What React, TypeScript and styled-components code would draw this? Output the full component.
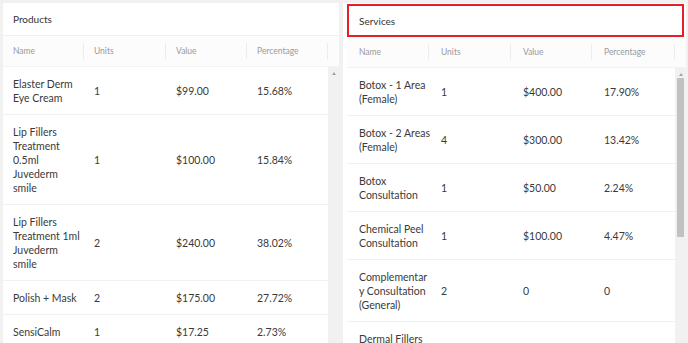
import styled, { createGlobalStyle } from "styled-components";

const GlobalStyle = createGlobalStyle`
    html, body {
        margin: 0;
        padding: 0;
        height: 343px;
        overflow: hidden;
        background: #f1f1f2;
    }
    body {
        font-family: Lato, "Open Sans", "Liberation Sans", sans-serif;
        color: #3b3b3b;
    }
`;

type Row = { name: string[]; units: string; value: string; pct: string };

const products: Row[] = [
    { name: ["Elaster Derm", "Eye Cream"], units: "1", value: "$99.00", pct: "15.68%" },
    { name: ["Lip Fillers", "Treatment", "0.5ml", "Juvederm", "smile"], units: "1", value: "$100.00", pct: "15.84%" },
    { name: ["Lip Fillers", "Treatment 1ml", "Juvederm", "smile"], units: "2", value: "$240.00", pct: "38.02%" },
    { name: ["Polish + Mask"], units: "2", value: "$175.00", pct: "27.72%" },
    { name: ["SensiCalm"], units: "1", value: "$17.25", pct: "2.73%" },
];

const services: Row[] = [
    { name: ["Botox - 1 Area", "(Female)"], units: "1", value: "$400.00", pct: "17.90%" },
    { name: ["Botox - 2 Areas", "(Female)"], units: "4", value: "$300.00", pct: "13.42%" },
    { name: ["Botox", "Consultation"], units: "1", value: "$50.00", pct: "2.24%" },
    { name: ["Chemical Peel", "Consultation"], units: "1", value: "$100.00", pct: "4.47%" },
    { name: ["Complementar", "y Consultation", "(General)"], units: "2", value: "0", pct: "0" },
    { name: ["Dermal Fillers", "Consultation", "(Lips)"], units: "1", value: "$0.00", pct: "0.00%" },
];

const Page = styled.div`
    display: grid;
    grid-template-columns: 336px 343px;
    column-gap: 4px;
    padding: 3px 2px 0 3px;
    height: 340px;
`;

const Panel = styled.section<{ $pad: number; $cols: string }>`
    --cell-pad: ${(p) => p.$pad}px;
    --cols: ${(p) => p.$cols};
    background: #ffffff;
    display: flex;
    flex-direction: column;
    overflow: hidden;
    min-height: 0;
`;

const Title = styled.div<{ $focused?: boolean }>`
    height: 33px;
    box-sizing: border-box;
    display: flex;
    align-items: center;
    padding-left: ${(p) => (p.$focused ? "10px" : "var(--cell-pad)")};
    font-size: 10px;
    color: #333;
    border: ${(p) => (p.$focused ? "2px solid #e3202a" : "none")};
    border-bottom: ${(p) => (p.$focused ? "2px solid #e3202a" : "1px solid #efefef")};
    margin: ${(p) => (p.$focused ? "1px 2px 0 4px" : "0")};
`;

const Body = styled.div<{ $offset?: boolean }>`
    display: flex;
    flex-direction: column;
    flex: 1;
    min-height: 0;
    padding-left: ${(p) => (p.$offset ? "4px" : "0")};
`;

const HeadRow = styled.div`
    display: grid;
    grid-template-columns: var(--cols) 1fr;
    height: 30px;
    background: #fcfcfc;
    border-bottom: 1px solid #f3f3f3;
`;

const HeadCell = styled.div`
    position: relative;
    display: flex;
    align-items: center;
    padding-left: var(--cell-pad);
    font-size: 8.5px;
    color: #9a9a9a;

    &::after {
        content: "";
        position: absolute;
        right: 0;
        top: 7px;
        bottom: 7px;
        width: 1px;
        background: #ececec;
    }
`;

const Scroller = styled.div`
    display: flex;
    flex: 1;
    min-height: 0;
    overflow: hidden;
`;

const Rows = styled.div`
    flex: 1;
`;

const DataRow = styled.div`
    display: grid;
    grid-template-columns: var(--cols);
    align-items: center;
    padding: 10px 0 9px;
    border-bottom: 1px solid #f1f1f1;
`;

const Cell = styled.div`
    padding-left: var(--cell-pad);
    font-size: 10.5px;
    line-height: 14px;
    color: #3a3a3a;
`;

const Line = styled.span`
    display: block;
    white-space: nowrap;
`;

const Track = styled.div`
    width: 11px;
    flex: none;
    background: #f1f1f1;
    display: flex;
    flex-direction: column;
    align-items: center;
    padding-top: 5px;
    box-sizing: border-box;
`;

const Arrow = styled.div`
    width: 0;
    height: 0;
    border-left: 2.5px solid transparent;
    border-right: 2.5px solid transparent;
    border-bottom: 3px solid #a3a3a3;
`;

const Thumb = styled.div<{ $top: number; $size: number }>`
    width: 7px;
    margin-top: ${(p) => p.$top}px;
    height: ${(p) => p.$size}px;
    background: #c1c1c1;
`;

function Table({ rows, thumb }: { rows: Row[]; thumb?: { top: number; size: number } }) {
    return (
        <>
            <HeadRow>
                <HeadCell>Name</HeadCell>
                <HeadCell>Units</HeadCell>
                <HeadCell>Value</HeadCell>
                <HeadCell>Percentage</HeadCell>
            </HeadRow>
            <Scroller>
                <Rows>
                    {rows.map((r, i) => (
                        <DataRow key={i}>
                            <Cell>
                                {r.name.map((l, j) => (
                                    <Line key={j}>{l}</Line>
                                ))}
                            </Cell>
                            <Cell>{r.units}</Cell>
                            <Cell>{r.value}</Cell>
                            <Cell>{r.pct}</Cell>
                        </DataRow>
                    ))}
                </Rows>
                <Track>
                    <Arrow />
                    {thumb && <Thumb $top={thumb.top} $size={thumb.size} />}
                </Track>
            </Scroller>
        </>
    );
}

export default function App() {
    return (
        <>
            <GlobalStyle />
            <Page>
                <Panel $pad={10} $cols="81px 82px 81px 81px">
                    <Title>Products</Title>
                    <Body>
                        <Table rows={products} />
                    </Body>
                </Panel>
                <Panel $pad={12} $cols="82px 82px 81px 83px">
                    <Title $focused>Services</Title>
                    <Body $offset>
                        <Table rows={services} thumb={{ top: 2, size: 159 }} />
                    </Body>
                </Panel>
            </Page>
        </>
    );
}
